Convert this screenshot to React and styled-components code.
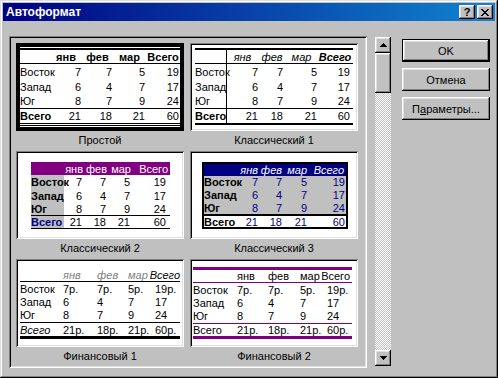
import React from "react";
import styled, { createGlobalStyle, css } from "styled-components";

const GlobalStyle = createGlobalStyle`
  html, body {
    margin: 0;
    padding: 0;
    background: #c0c0c0;
  }
  body {
    font-family: "Liberation Sans", Arial, sans-serif;
    font-size: 11px;
    color: #000;
  }
  * {
    box-sizing: border-box;
  }
`;

const raised = css`
  box-shadow: inset -1px -1px #000, inset 1px 1px #fff, inset -2px -2px #808080,
    inset 2px 2px #dfdfdf;
`;

const sunken = css`
  box-shadow: inset 1px 1px #808080, inset -1px -1px #fff, inset 2px 2px #000,
    inset -2px -2px #dfdfdf;
`;

const Window = styled.div`
  width: 498px;
  height: 378px;
  padding: 3px;
  background: #c0c0c0;
  box-shadow: inset -1px -1px #000, inset 1px 1px #dfdfdf, inset -2px -2px #808080,
    inset 2px 2px #fff;
  display: flex;
  flex-direction: column;
`;

const TitleBar = styled.div`
  height: 18px;
  display: flex;
  align-items: center;
  padding: 0 2px 0 3px;
  background: linear-gradient(to right, #000080, #1084d0);
`;

const Title = styled.span`
  flex: 1;
  color: #fff;
  font-weight: bold;
  font-size: 12px;
`;

const CaptionButton = styled.div`
  width: 16px;
  height: 14px;
  background: #c0c0c0;
  ${raised}
  display: flex;
  align-items: center;
  justify-content: center;
  font-weight: bold;
  font-size: 11px;
  line-height: 1;
  & + & {
    margin-left: 2px;
  }
`;

const Body = styled.div`
  display: flex;
  align-items: flex-start;
  padding: 15px 0 0 6px;
`;

const ListBox = styled.div`
  width: 358px;
  height: 332px;
  padding: 7px 0 0 7px;
  ${sunken}
  overflow: hidden;
  display: grid;
  grid-template-columns: 168px 168px;
  column-gap: 6px;
  grid-auto-rows: 108px;
  align-content: start;
`;

const Item = styled.div`
  display: flex;
  flex-direction: column;
`;

const Preview = styled.div`
  width: 168px;
  height: 88px;
  background: #fff;
  overflow: hidden;
  ${(p) =>
    p.$selected
      ? css`
          border: 4px solid #000;
        `
      : css`
          padding: 2px;
          ${sunken}
        `}
`;

const Caption = styled.div`
  height: 18px;
  line-height: 18px;
  text-align: center;
  white-space: nowrap;
`;

const Sheet = styled.div`
  display: grid;
  grid-template-columns: ${(p) => p.$cols};
  width: max-content;
  margin: ${(p) => p.$mt}px 0 0 ${(p) => p.$ml}px;
  border: ${(p) => p.$frame || "none"};
`;

const justify = { left: "flex-start", right: "flex-end", center: "center" };

const Cell = styled.div`
  box-sizing: content-box;
  height: ${(p) => p.$h}px;
  display: flex;
  align-items: center;
  justify-content: ${(p) => justify[p.$align || "left"]};
  padding: 0 ${(p) => p.$pr || 0}px 0 0;
  white-space: nowrap;
  background: ${(p) => p.$bg || "transparent"};
  color: ${(p) => p.$color || "#000"};
  font-weight: ${(p) => (p.$bold ? "bold" : "normal")};
  font-style: ${(p) => (p.$italic ? "italic" : "normal")};
  border-top: ${(p) => p.$bt || "none"};
  border-bottom: ${(p) => p.$bb || "none"};
  border-right: ${(p) => p.$br || "none"};
  ${(p) =>
    p.$front &&
    css`
      position: relative;
      z-index: 1;
    `}
`;

const ScrollBar = styled.div`
  width: 16px;
  height: 329px;
  margin: 1px 0 0 8px;
  display: flex;
  flex-direction: column;
  background: repeating-conic-gradient(#c0c0c0 0 25%, #fff 0 50%) 0 0 / 2px 2px;
`;

const ArrowButton = styled.div`
  width: 16px;
  height: 16px;
  background: #c0c0c0;
  ${raised}
  display: flex;
  align-items: center;
  justify-content: center;
`;

const Thumb = styled.div`
  height: 40px;
  background: #c0c0c0;
  ${raised}
`;

const Track = styled.div`
  flex: 1;
`;

const Buttons = styled.div`
  width: 88px;
  margin: 3px 0 0 11px;
  display: flex;
  flex-direction: column;
  gap: 6px;
`;

const DialogButton = styled.div`
  height: 23px;
  background: #c0c0c0;
  border: ${(p) => (p.$default ? "1px solid #000" : "none")};
  ${raised}
  display: flex;
  align-items: center;
  justify-content: center;
  font-size: 11px;
  & u {
    text-decoration: underline;
  }
`;

const MONTHS = ["янв", "фев", "мар", "Всего"];
const ROWS = [
  ["Восток", 7, 7, 5, 19],
  ["Запад", 6, 4, 7, 17],
  ["Юг", 8, 7, 9, 24],
];
const TOTAL = ["Всего", 21, 18, 21, 60];

const FORMATS = [
  {
    name: "Простой",
    selected: true,
    cols: "30px 32px 31px 33px 34px",
    ml: 0,
    mt: 1,
    head: { $h: 13, $bt: "2px solid #000", $bb: "1px solid #000", $bold: true, $align: "center" },
    body: { $align: "right", $pr: 1 },
    bodyH: [15, 15, 14],
    total: { $h: 14, $bt: "1px solid #000", $bb: "3px double #000", $align: "right", $pr: 1 },
    totalLabel: { $bold: true },
  },
  {
    name: "Классический 1",
    cols: "32px 34px 25px 34px 33px",
    ml: 3,
    mt: 3,
    head: { $h: 13, $bt: "2px solid #000", $bb: "1px solid #000", $italic: true, $align: "center", $pr: 3 },
    headLast: { $bold: true },
    labelAll: { $br: "1px solid #000" },
    body: { $align: "right", $pr: 3 },
    bodyH: [15, 15, 14],
    total: { $h: 14, $bt: "1px solid #000", $bb: "2px solid #000", $align: "right", $pr: 3 },
    totalLabel: { $bold: true },
  },
  {
    name: "Классический 2",
    cols: "33px 22px 24px 24px 36px",
    ml: 13,
    mt: 9,
    head: { $h: 13, $bg: "#800080", $color: "#fff", $align: "right", $pr: 3 },
    headLast: { $pr: 2 },
    body: { $align: "right", $pr: 4 },
    bodyH: [14, 13, 13],
    bodyLabel: { $bold: true, $bg: "#c0c0c0", $front: true },
    total: { $h: 12, $bt: "1px solid #000", $bb: "1px solid #000", $align: "right", $pr: 4 },
    totalLabel: { $bold: true, $color: "#000080", $bg: "#c0c0c0", $front: true },
  },
  {
    name: "Классический 3",
    cols: "32px 23px 24px 25px 38px",
    frame: "2px solid #000",
    ml: 10,
    mt: 9,
    head: { $h: 12, $bg: "#000080", $color: "#fff", $italic: true, $align: "right", $pr: 1 },
    headLast: { $pr: 2 },
    body: { $bg: "#c0c0c0", $color: "#000080", $align: "right", $pr: 1 },
    bodyH: [12, 13, 13],
    bodyLabel: { $bold: true, $color: "#000", $front: true },
    total: { $h: 11, $bt: "2px solid #000", $color: "#000080", $align: "right", $pr: 1 },
    totalLabel: { $bold: true, $color: "#000", $front: true },
  },
  {
    name: "Финансовый 1",
    money: true,
    cols: "43px 34px 31px 27px 25px",
    ml: 2,
    mt: 7,
    head: { $h: 13, $bb: "1px solid #000", $italic: true, $color: "#808080" },
    headLast: { $color: "#000", $align: "right", $pr: 0 },
    body: {},
    bodyH: [13, 13, 14],
    total: { $h: 13, $bt: "1px solid #000", $bb: "3px solid #000" },
    totalLabel: { $italic: true },
  },
  {
    name: "Финансовый 2",
    money: true,
    cols: "44px 31px 32px 27px 25px",
    ml: 1,
    mt: 6,
    head: { $h: 12, $bt: "3px solid #800080", $bb: "1px solid #800080" },
    headLast: { $align: "right", $pr: 2 },
    body: {},
    bodyH: [13, 13, 14],
    total: { $h: 12, $bt: "1px solid #800080", $bb: "3px solid #800080" },
  },
];

const SheetPreview = ({ format: f }) => {
  const value = (v, moneyRow) => (moneyRow && f.money ? `${v}р.` : v);
  const row = (key, values, style, labelStyle, lastStyle, moneyRow) =>
    values.map((v, i) => {
      let props = style;
      if (i === 0) props = { ...style, $align: "left", $pr: 0, ...f.labelAll, ...labelStyle };
      else if (i === values.length - 1) props = { ...style, ...lastStyle };
      return (
        <Cell key={key + i} {...props}>
          {i === 0 ? v : value(v, moneyRow)}
        </Cell>
      );
    });

  return (
    <Sheet $cols={f.cols} $ml={f.ml} $mt={f.mt} $frame={f.frame}>
      {row("h", ["", ...MONTHS], f.head, f.headLabel, f.headLast, false)}
      {ROWS.map((r, n) =>
        row("r" + n, r, { ...f.body, $h: f.bodyH[n] }, f.bodyLabel, null, n === 0)
      )}
      {row("t", TOTAL, f.total, f.totalLabel, null, true)}
    </Sheet>
  );
};

const Arrow = ({ down }) => (
  <svg width="7" height="4" viewBox="0 0 7 4" shapeRendering="crispEdges">
    <g fill="#000" transform={down ? "matrix(1 0 0 -1 0 4)" : undefined}>
      <rect x="3" y="0" width="1" height="1" />
      <rect x="2" y="1" width="3" height="1" />
      <rect x="1" y="2" width="5" height="1" />
      <rect x="0" y="3" width="7" height="1" />
    </g>
  </svg>
);

const CloseGlyph = () => (
  <svg width="8" height="7" viewBox="0 0 8 7" shapeRendering="crispEdges">
    <g fill="#000">
      <rect x="0" y="0" width="2" height="1" />
      <rect x="6" y="0" width="2" height="1" />
      <rect x="1" y="1" width="2" height="1" />
      <rect x="5" y="1" width="2" height="1" />
      <rect x="2" y="2" width="4" height="1" />
      <rect x="3" y="3" width="2" height="1" />
      <rect x="2" y="4" width="4" height="1" />
      <rect x="1" y="5" width="2" height="1" />
      <rect x="5" y="5" width="2" height="1" />
      <rect x="0" y="6" width="2" height="1" />
      <rect x="6" y="6" width="2" height="1" />
    </g>
  </svg>
);

export default function App() {
  return (
    <>
      <GlobalStyle />
      <Window>
        <TitleBar>
          <Title>Автоформат</Title>
          <CaptionButton>?</CaptionButton>
          <CaptionButton>
            <CloseGlyph />
          </CaptionButton>
        </TitleBar>
        <Body>
          <ListBox>
            {FORMATS.map((f) => (
              <Item key={f.name}>
                <Preview $selected={f.selected}>
                  <SheetPreview format={f} />
                </Preview>
                <Caption>{f.name}</Caption>
              </Item>
            ))}
          </ListBox>
          <ScrollBar>
            <ArrowButton>
              <Arrow />
            </ArrowButton>
            <Thumb />
            <Track />
            <ArrowButton>
              <Arrow down />
            </ArrowButton>
          </ScrollBar>
          <Buttons>
            <DialogButton $default>OK</DialogButton>
            <DialogButton>Отмена</DialogButton>
            <DialogButton>
              <span>
                П<u>а</u>раметры...
              </span>
            </DialogButton>
          </Buttons>
        </Body>
      </Window>
    </>
  );
}
